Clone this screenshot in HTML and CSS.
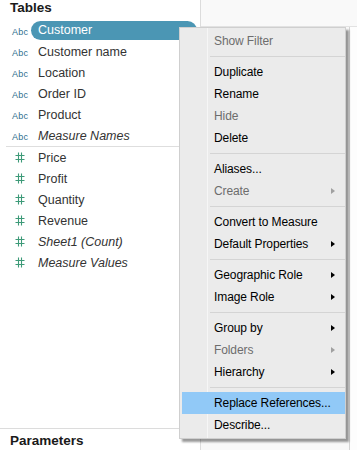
FILE: index.html
```html
<!DOCTYPE html>
<html lang="en">
<head>
    <meta charset="UTF-8">
    <meta name="viewport" content="width=device-width, initial-scale=1.0">
    <title>Data pane</title>
    <link rel="stylesheet" href="styles.css">
</head>
<body>

    <div class="app">
        <div class="sidebar">
            <div class="pane-title">Tables</div>
            <div class="fields">
                <div class="field selected"><span class="type abc">Abc</span><span class="name">Customer</span></div>
                <div class="field"><span class="type abc">Abc</span><span class="name">Customer name</span></div>
                <div class="field"><span class="type abc">Abc</span><span class="name">Location</span></div>
                <div class="field"><span class="type abc">Abc</span><span class="name">Order ID</span></div>
                <div class="field"><span class="type abc">Abc</span><span class="name">Product</span></div>
                <div class="field"><span class="type abc">Abc</span><span class="name italic">Measure Names</span></div>
                <div class="divider"></div>
                <div class="field"><span class="type num"><svg width="10" height="11" viewBox="0 0 10 11"><path d="M3.5 0.5v10M6.5 0.5v10M0.5 3.5h9M0.5 7.5h9" stroke="#3d9a78" stroke-width="1.1" fill="none"/></svg></span><span class="name">Price</span></div>
                <div class="field"><span class="type num"><svg width="10" height="11" viewBox="0 0 10 11"><path d="M3.5 0.5v10M6.5 0.5v10M0.5 3.5h9M0.5 7.5h9" stroke="#3d9a78" stroke-width="1.1" fill="none"/></svg></span><span class="name">Profit</span></div>
                <div class="field"><span class="type num"><svg width="10" height="11" viewBox="0 0 10 11"><path d="M3.5 0.5v10M6.5 0.5v10M0.5 3.5h9M0.5 7.5h9" stroke="#3d9a78" stroke-width="1.1" fill="none"/></svg></span><span class="name">Quantity</span></div>
                <div class="field"><span class="type num"><svg width="10" height="11" viewBox="0 0 10 11"><path d="M3.5 0.5v10M6.5 0.5v10M0.5 3.5h9M0.5 7.5h9" stroke="#3d9a78" stroke-width="1.1" fill="none"/></svg></span><span class="name">Revenue</span></div>
                <div class="field"><span class="type num"><svg width="10" height="11" viewBox="0 0 10 11"><path d="M3.5 0.5v10M6.5 0.5v10M0.5 3.5h9M0.5 7.5h9" stroke="#3d9a78" stroke-width="1.1" fill="none"/></svg></span><span class="name italic">Sheet1 (Count)</span></div>
                <div class="field"><span class="type num"><svg width="10" height="11" viewBox="0 0 10 11"><path d="M3.5 0.5v10M6.5 0.5v10M0.5 3.5h9M0.5 7.5h9" stroke="#3d9a78" stroke-width="1.1" fill="none"/></svg></span><span class="name italic">Measure Values</span></div>
            </div>
            <div class="pane-title params">Parameters</div>
        </div>

        <div class="workspace">
            <div class="toolbar"></div>
            <div class="canvas">
                <div class="shelf"></div>
            </div>
        </div>
    </div>

    <div class="context-menu">
        <div class="item disabled">Show Filter</div>
        <div class="sep"></div>
        <div class="item">Duplicate</div>
        <div class="item">Rename</div>
        <div class="item disabled">Hide</div>
        <div class="item">Delete</div>
        <div class="sep"></div>
        <div class="item">Aliases...</div>
        <div class="item disabled sub">Create</div>
        <div class="sep"></div>
        <div class="item">Convert to Measure</div>
        <div class="item sub">Default Properties</div>
        <div class="sep"></div>
        <div class="item sub">Geographic Role</div>
        <div class="item sub">Image Role</div>
        <div class="sep"></div>
        <div class="item sub">Group by</div>
        <div class="item disabled sub">Folders</div>
        <div class="item sub">Hierarchy</div>
        <div class="sep"></div>
        <div class="item active">Replace References...</div>
        <div class="item">Describe...</div>
    </div>

</body>
</html>
```

FILE: styles.css
```css
body {
    margin: 0;
    width: 357px;
    height: 450px;
    overflow: hidden;
    font-family: "Liberation Sans", Arial, sans-serif;
    background: #ffffff;
}
.app {
    display: flex;
    height: 450px;
}
.sidebar {
    width: 200px;
    border-right: 1px solid #dcdcdc;
    display: flex;
    flex-direction: column;
    background: #fff;
}
.pane-title {
    height: 20px;
    padding-left: 10px;
    font-size: 13.5px;
    font-weight: bold;
    line-height: 15px;
    color: #1a1a1a;
}
.pane-title.params {
    height: 21px;
    border-top: 1px solid #dcdcdc;
    line-height: 23px;
}
.fields {
    flex: 1;
}
.field {
    display: flex;
    align-items: center;
    height: 21px;
    font-size: 12.5px;
    color: #333;
}
.type {
    width: 24px;
    padding-left: 12px;
    flex-shrink: 0;
}
.type.abc {
    font-size: 9px;
    color: #2f6f8f;
    letter-spacing: 0.2px;
    padding-top: 2px;
}
.type.num {
    padding-left: 15px;
    width: 21px;
    display: flex;
    align-items: center;
}
.name {
    padding-left: 2px;
}
.italic {
    font-style: italic;
}
.field.selected .name {
    margin-left: -5px;
    padding-left: 7px;
    height: 19px;
    line-height: 19px;
    flex: 1;
    margin-right: 3px;
    background: #4b96b4;
    color: #fff;
    border-radius: 10px;
}
.divider {
    height: 1px;
    margin-left: 6px;
    background: #dedede;
}
.workspace {
    flex: 1;
    display: flex;
    flex-direction: column;
    background: #f8f8f8;
}
.toolbar {
    height: 26px;
    border-bottom: 1px solid #e2e2e2;
    background: #f9f9f9;
}
.canvas {
    flex: 1;
    display: flex;
    justify-content: flex-end;
}
.shelf {
    width: 7px;
    border-left: 1px solid #d4d4d4;
    background: #fdfdfd;
}
.context-menu {
    position: absolute;
    left: 179px;
    top: 27px;
    width: 165px;
    padding: 2px 0;
    background: #ebebeb linear-gradient(to right, transparent 27px, #f6f6f6 27px, #f6f6f6 28px, transparent 28px);
    border: 1px solid #cfcfcf;
    box-shadow: 3px 3px 2px rgba(0, 0, 0, 0.4);
    font-size: 12px;
    letter-spacing: -0.1px;
}
.item {
    display: flex;
    align-items: center;
    height: 22px;
    padding-left: 32px;
    margin-left: 2px;
    color: #000;
}
.item.disabled {
    color: #6d6d6d;
}
.item.sub::after {
    content: "";
    margin-left: auto;
    margin-right: 10px;
    border-left: 4px solid #000;
    border-top: 3.5px solid transparent;
    border-bottom: 3.5px solid transparent;
}
.item.disabled.sub::after {
    border-left-color: #a0a0a0;
}
.item.active {
    background: #91c9f7;
}
.sep {
    height: 9px;
    margin-left: 30px;
    background: linear-gradient(#d4d4d4, #d4d4d4) 0 4px / 100% 1px no-repeat;
}
```
